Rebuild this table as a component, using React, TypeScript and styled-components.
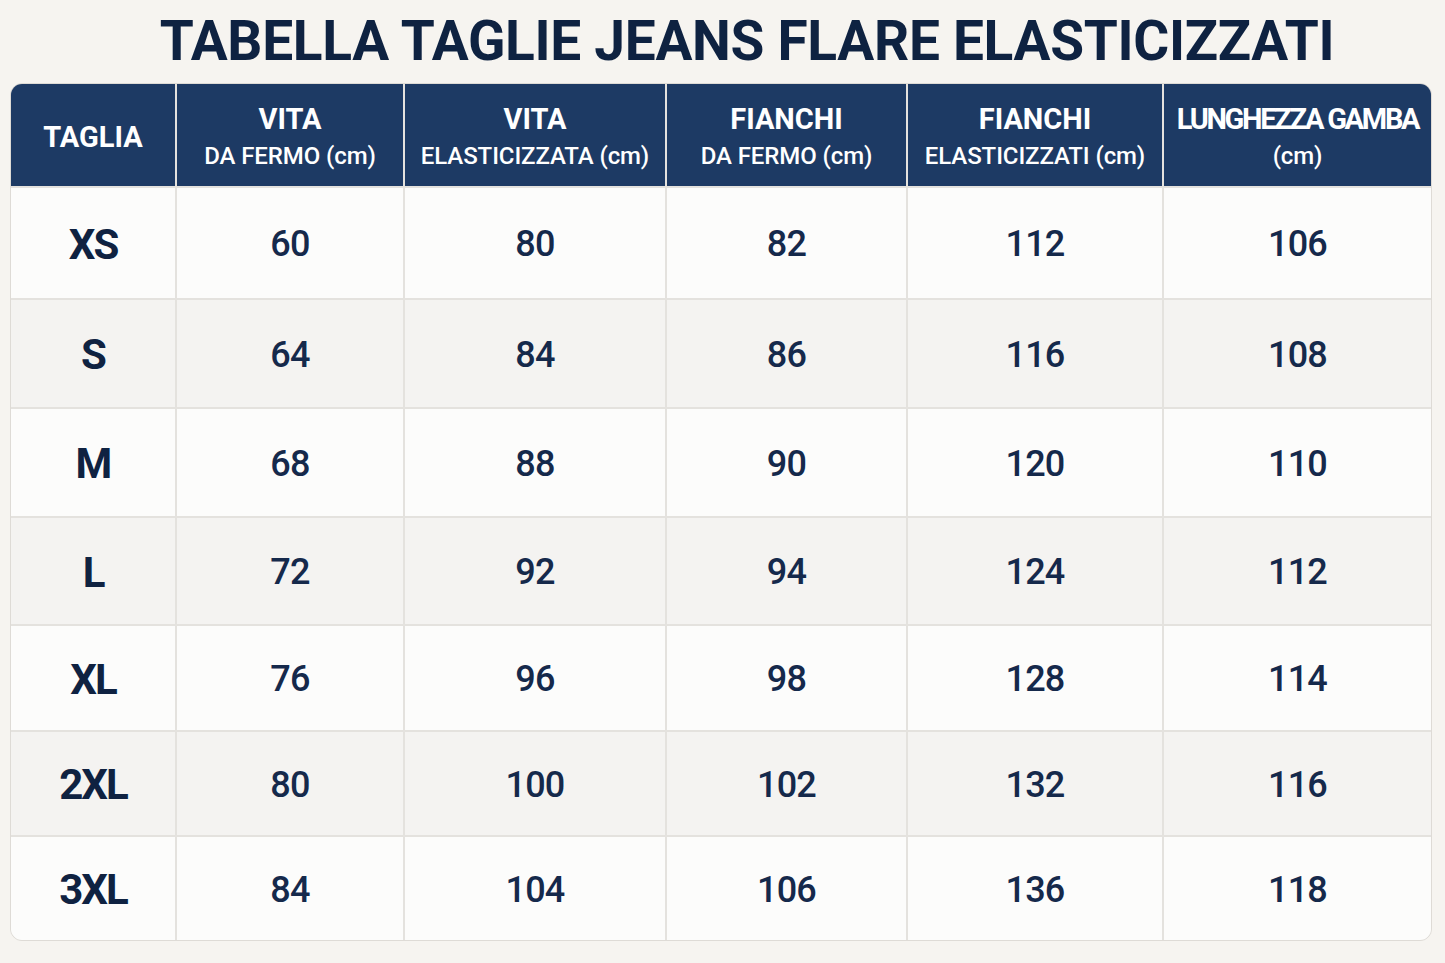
import React from "react";
import styled, { createGlobalStyle } from "styled-components";

const GlobalStyle = createGlobalStyle`
  html, body {
    margin: 0;
    padding: 0;
    background: #f6f4f0;
  }
  body {
    font-family: Roboto, "Liberation Sans", Arial, sans-serif;
  }
`;

const Page = styled.main`
  width: 1445px;
  min-height: 963px;
  box-sizing: border-box;
  padding: 14px 13px 20px 10px;
  background: #f6f4f0;
`;

const Title = styled.h1`
  margin: 0 0 14px;
  padding-left: 52px;
  font-family: Roboto, "Liberation Sans", Arial, sans-serif;
  font-weight: 700;
  font-size: 55px;
  line-height: 55px;
  letter-spacing: -0.3px;
  color: #0e2241;
  text-align: center;
  white-space: nowrap;
`;

const Table = styled.div`
  display: grid;
  grid-template-columns: 164px 226px 260px 239px 254px 267px;
  grid-template-rows: 102px 110px 107px 107px 106px 104px 103px 103px;
  gap: 2px;
  background: #e4e2de;
  border: 1px solid #dedbd6;
  border-radius: 12px;
  overflow: hidden;
`;

const HeaderCell = styled.div`
  display: flex;
  flex-direction: column;
  align-items: center;
  justify-content: center;
  padding-top: 5px;
  background: #1d3a64;
  color: #ffffff;
  text-align: center;
`;

const HeadMain = styled.div<{ $squeeze?: boolean }>`
  font-family: Roboto, "Liberation Sans", Arial, sans-serif;
  font-weight: 700;
  font-size: 29px;
  line-height: 37px;
  letter-spacing: ${(p) => (p.$squeeze ? "-2.3px" : "0px")};
  white-space: nowrap;
`;

const HeadSub = styled.div`
  font-family: Roboto, "Liberation Sans", Arial, sans-serif;
  font-weight: 500;
  font-size: 24px;
  line-height: 37px;
  letter-spacing: -0.1px;
  white-space: nowrap;
`;

const Cell = styled.div<{ $alt: boolean }>`
  display: flex;
  align-items: center;
  justify-content: center;
  padding-top: 2px;
  background: ${(p) => (p.$alt ? "#f4f3f1" : "#fcfcfb")};
  color: #15294b;
  font-family: Roboto, "Liberation Sans", Arial, sans-serif;
  font-weight: 500;
  font-size: 36px;
  letter-spacing: -0.8px;
`;

const SizeCell = styled(Cell)`
  color: #0f2241;
  font-weight: 700;
  font-size: 42px;
  letter-spacing: -2px;
`;

const headers: { main: string; sub?: string; squeeze?: boolean }[] = [
  { main: "TAGLIA" },
  { main: "VITA", sub: "DA FERMO (cm)" },
  { main: "VITA", sub: "ELASTICIZZATA (cm)" },
  { main: "FIANCHI", sub: "DA FERMO (cm)" },
  { main: "FIANCHI", sub: "ELASTICIZZATI (cm)" },
  { main: "LUNGHEZZA GAMBA", sub: "(cm)", squeeze: true },
];

const rows: string[][] = [
  ["XS", "60", "80", "82", "112", "106"],
  ["S", "64", "84", "86", "116", "108"],
  ["M", "68", "88", "90", "120", "110"],
  ["L", "72", "92", "94", "124", "112"],
  ["XL", "76", "96", "98", "128", "114"],
  ["2XL", "80", "100", "102", "132", "116"],
  ["3XL", "84", "104", "106", "136", "118"],
];

export default function App() {
  return (
    <>
      <GlobalStyle />
      <Page>
        <Title>TABELLA TAGLIE JEANS FLARE ELASTICIZZATI</Title>
        <Table>
          {headers.map((h, i) => (
            <HeaderCell key={`h${i}`}>
              <HeadMain $squeeze={h.squeeze}>{h.main}</HeadMain>
              {h.sub && <HeadSub>{h.sub}</HeadSub>}
            </HeaderCell>
          ))}
          {rows.map((r, ri) =>
            r.map((v, ci) =>
              ci === 0 ? (
                <SizeCell key={`${ri}-${ci}`} $alt={ri % 2 === 1}>
                  {v}
                </SizeCell>
              ) : (
                <Cell key={`${ri}-${ci}`} $alt={ri % 2 === 1}>
                  {v}
                </Cell>
              )
            )
          )}
        </Table>
      </Page>
    </>
  );
}
